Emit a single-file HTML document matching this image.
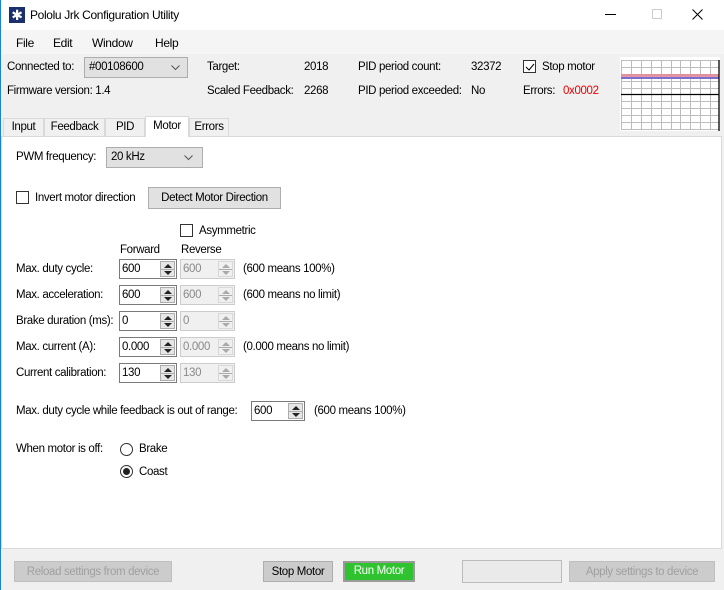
<!DOCTYPE html>
<html><head><meta charset="utf-8"><style>
*{box-sizing:border-box;margin:0;padding:0}
body{width:724px;height:590px;overflow:hidden;background:#f0f0f0;font-family:"Liberation Sans",sans-serif;font-size:11.5px;color:#000;position:relative;letter-spacing:-0.35px}
.a{position:absolute;white-space:nowrap}
.title{left:0;top:0;width:724px;height:30px;background:#fff}
.menu{left:0;top:30px;width:724px;height:24px;background:#f5f5f5}
.panel{left:1px;top:136px;width:721px;height:413px;background:#fff;border:1px solid #d9d9d9}
.btn{position:absolute;background:#e1e1e1;border:1px solid #adadad;text-align:center;line-height:20px}
.dis{color:#a0a0a0;background:#cccccc;border-color:#bfbfbf}
.sp{position:absolute;width:58px;height:20px;border:1px solid #7a7a7a;background:#fff;padding-left:2px;line-height:18px}
.sp.d{border-color:#cccccc;background:#f0f0f0;color:#8a8a8a}
.sp i{position:absolute;right:1px;top:1px;width:15px;height:16px;background:#e6e6e6;border:1px solid #acacac}
.sp.d i{background:#f0f0f0;border-color:#d8d8d8}
.sp i:before{content:"";position:absolute;left:3px;top:2px;border:4px solid transparent;border-bottom:4px solid #222;border-top:0}
.sp i:after{content:"";position:absolute;left:3px;top:9px;border:4px solid transparent;border-top:4px solid #222;border-bottom:0}
.sp.d i:before{border-bottom-color:#aaa}.sp.d i:after{border-top-color:#aaa}
.sp i b{position:absolute;left:0;right:0;top:7px;height:1px;background:#acacac}
.cb{position:absolute;width:13px;height:13px;border:1px solid #333;background:#fff}
.rb{position:absolute;width:13px;height:13px;border:1px solid #333;border-radius:50%;background:#fff}
.tab{position:absolute;top:118px;height:18px;border:1px solid #d9d9d9;border-bottom:none;background:#f0f0f0;line-height:17px;text-align:center}
</style></head><body>
<div style="position:absolute;left:0;top:0;width:1px;height:590px;background:#1883d7;z-index:5"></div>
<div class="a title"></div>
<div class="a" style="left:9px;top:7px;width:16px;height:16px;background:#1a2f6e;color:#fff;font-size:14px;line-height:16px;text-align:center">✱</div>
<div class="a" style="left:30px;top:8px;font-size:12px">Pololu Jrk Configuration Utility</div>
<div class="a" style="left:605px;top:14px;width:11px;height:1px;background:#000"></div>
<div class="a" style="left:652px;top:9px;width:10px;height:10px;border:1px solid #ccc"></div>
<svg class="a" style="left:692px;top:9px" width="11" height="11"><path d="M0.5 0.5L10.5 10.5M10.5 0.5L0.5 10.5" stroke="#000" stroke-width="1"/></svg>
<div class="a menu"></div>
<div class="a" style="left:16px;top:36px;font-size:12px">File</div>
<div class="a" style="left:53px;top:36px;font-size:12px">Edit</div>
<div class="a" style="left:92px;top:36px;font-size:12px">Window</div>
<div class="a" style="left:155px;top:36px;font-size:12px">Help</div>

<div class="a" style="left:7px;top:61px">Connected to:</div>
<div class="a" style="left:84px;top:57px;width:104px;height:21px;border:1px solid #adadad;background:#e1e1e1;padding-left:4px;line-height:19px">#00108600<svg style="position:absolute;right:7px;top:7px" width="9" height="6"><path d="M0.5 0.5L4.5 4.5L8.5 0.5" fill="none" stroke="#555"/></svg></div>
<div class="a" style="left:7px;top:85px">Firmware version: 1.4</div>
<div class="a" style="left:207px;top:61px">Target:</div>
<div class="a" style="left:304px;top:61px">2018</div>
<div class="a" style="left:207px;top:85px">Scaled Feedback:</div>
<div class="a" style="left:304px;top:85px">2268</div>
<div class="a" style="left:358px;top:61px">PID period count:</div>
<div class="a" style="left:471px;top:61px">32372</div>
<div class="a" style="left:358px;top:85px">PID period exceeded:</div>
<div class="a" style="left:471px;top:85px">No</div>
<div class="cb" style="left:523px;top:60px"><svg style="position:absolute;left:1px;top:1px" width="10" height="10"><path d="M1 5L4 8L9 2" fill="none" stroke="#000"/></svg></div>
<div class="a" style="left:542px;top:61px">Stop motor</div>
<div class="a" style="left:523px;top:85px">Errors:</div>
<div class="a" style="left:563px;top:85px;color:#e00">0x0002</div>
<svg class="a" style="left:620px;top:57px" width="100" height="74">
<rect width="100" height="74" fill="#fff"/>
<g stroke="#bdbdbd" stroke-width="1">
<path d="M1.5 3V72M11.5 3V72M21.5 3V72M31.5 3V72M41.5 3V72M51.5 3V72M60.5 3V72M70.5 3V72M80.5 3V72M90.5 3V72"/>
<path d="M1 3.5H99M1 10.5H99M1 17.5H99M1 24.5H99M1 31.5H99M1 44.5H99M1 51.5H99M1 58.5H99M1 65.5H99M1 72.5H99"/>
</g>
<rect x="1" y="17" width="98" height="3" fill="#e08a9a" opacity=".9"/>
<rect x="1" y="20" width="98" height="2" fill="#7a6fd0"/>
<path d="M1 37.5H99M99 3V74" stroke="#000" stroke-width="1.3"/>
</svg>

<div class="a panel"></div>
<div class="tab" style="left:3px;width:41px">Input</div>
<div class="tab" style="left:44px;width:61px">Feedback</div>
<div class="tab" style="left:105px;width:40px">PID</div>
<div class="tab" style="left:189px;width:40px">Errors</div>
<div class="tab" style="left:145px;top:116px;width:44px;height:21px;background:#fff;line-height:18px">Motor</div>

<div class="a" style="left:16px;top:151px">PWM frequency:</div>
<div class="a" style="left:106px;top:147px;width:97px;height:21px;border:1px solid #adadad;background:#e1e1e1;padding-left:4px;line-height:19px">20 kHz<svg style="position:absolute;right:9px;top:7px" width="9" height="6"><path d="M0.5 0.5L4.5 4.5L8.5 0.5" fill="none" stroke="#555"/></svg></div>
<div class="cb" style="left:16px;top:191px"></div>
<div class="a" style="left:35px;top:192px">Invert motor direction</div>
<div class="btn" style="left:148px;top:187px;width:133px;height:22px">Detect Motor Direction</div>
<div class="cb" style="left:180px;top:224px"></div>
<div class="a" style="left:199px;top:225px">Asymmetric</div>
<div class="a" style="left:120px;top:244px">Forward</div>
<div class="a" style="left:181px;top:244px">Reverse</div>

<div class="a" style="left:16px;top:263px">Max. duty cycle:</div>
<div class="sp" style="left:119px;top:259px">600<i><b></b></i></div>
<div class="sp d" style="left:180px;top:259px;width:55px">600<i><b></b></i></div>
<div class="a" style="left:243px;top:263px">(600 means 100%)</div>
<div class="a" style="left:16px;top:289px">Max. acceleration:</div>
<div class="sp" style="left:119px;top:285px">600<i><b></b></i></div>
<div class="sp d" style="left:180px;top:285px;width:55px">600<i><b></b></i></div>
<div class="a" style="left:243px;top:289px">(600 means no limit)</div>
<div class="a" style="left:16px;top:315px">Brake duration (ms):</div>
<div class="sp" style="left:119px;top:311px">0<i><b></b></i></div>
<div class="sp d" style="left:180px;top:311px;width:55px">0<i><b></b></i></div>
<div class="a" style="left:16px;top:341px">Max. current (A):</div>
<div class="sp" style="left:119px;top:337px">0.000<i><b></b></i></div>
<div class="sp d" style="left:180px;top:337px;width:55px">0.000<i><b></b></i></div>
<div class="a" style="left:243px;top:341px">(0.000 means no limit)</div>
<div class="a" style="left:16px;top:367px">Current calibration:</div>
<div class="sp" style="left:119px;top:363px">130<i><b></b></i></div>
<div class="sp d" style="left:180px;top:363px;width:55px">130<i><b></b></i></div>

<div class="a" style="left:16px;top:405px">Max. duty cycle while feedback is out of range:</div>
<div class="sp" style="left:251px;top:401px;width:54px">600<i><b></b></i></div>
<div class="a" style="left:314px;top:405px">(600 means 100%)</div>
<div class="a" style="left:16px;top:443px">When motor is off:</div>
<div class="rb" style="left:120px;top:443px"></div>
<div class="a" style="left:139px;top:443px">Brake</div>
<div class="rb" style="left:120px;top:465px"><div style="position:absolute;left:2px;top:2px;width:7px;height:7px;border-radius:50%;background:#222"></div></div>
<div class="a" style="left:139px;top:466px">Coast</div>

<div class="btn dis" style="left:14px;top:561px;width:158px;height:21px">Reload settings from device</div>
<div class="btn" style="left:263px;top:561px;width:70px;height:21px;background:#cccccc">Stop Motor</div>
<div class="btn" style="left:343px;top:561px;width:72px;height:21px;background:#2fc42f;color:#fff;border:2px solid #9a9a9a;line-height:17px">Run Motor</div>
<div class="btn" style="left:462px;top:560px;width:100px;height:23px;background:#eaeaea;border-color:#bbb"></div>
<div class="btn dis" style="left:569px;top:561px;width:146px;height:21px">Apply settings to device</div>
</body></html>
